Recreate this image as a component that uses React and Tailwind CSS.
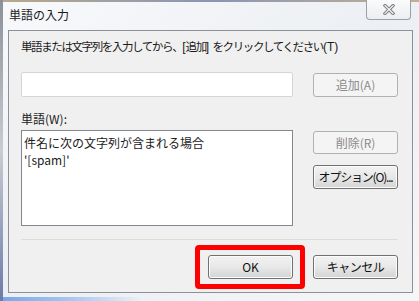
import React from 'react';

const font = { fontFamily: '"Noto Sans CJK JP", "Noto Sans", sans-serif' };
const latin = { fontFamily: '"Liberation Sans", "Noto Sans", sans-serif' };

const WinButton = ({ children, disabled, className = '' }) => (
    <button
        type="button"
        disabled={disabled}
        className={`relative w-[85px] rounded-[3px] border text-[12px] leading-none flex items-center justify-center whitespace-nowrap ${disabled
            ? 'border-[#adb2b5] bg-[#f4f4f4] text-[#8a8a8a]'
            : 'border-[#707070] bg-gradient-to-b from-[#f2f2f2] via-[#e8e8e8] to-[#d4d4d4] text-[#111] shadow-[inset_0_0_0_1px_#fcfcfc]'} ${className}`}
    >
        {children}
    </button>
);

const CloseGlyph = () => (
    <svg width="12" height="11" viewBox="0 0 12 11">
        <path d="M2 1.5 L10 9.5 M10 1.5 L2 9.5" stroke="#7d8085" strokeWidth="3.2" strokeLinecap="square" />
        <path d="M2 1.5 L10 9.5 M10 1.5 L2 9.5" stroke="#f6f6f6" strokeWidth="1.2" strokeLinecap="square" />
    </svg>
);

const App = () => {
    return (
        <div className="w-[419px] h-[301px] overflow-hidden flex bg-[#eef1f4]" style={font}>
            {/* desktop edge behind the window */}
            <div className="w-[3px] h-full bg-gradient-to-b from-[#8c9099] via-[#c9ccd1] to-[#6b7ca8]" />

            <div className="flex-1 flex flex-col bg-gradient-to-br from-[#f8f9fb] via-[#eceff3] to-[#f5f6f8]">
                {/* noise strip along the top */}
                <div className="h-[2px] bg-gradient-to-r from-[#b9a98a] via-[#8a94b4] to-[#c2b08e]" />

                {/* title bar */}
                <div className="h-[28px] flex items-start justify-between">
                    <div className="pl-[6px] pt-[5px] text-[12px] leading-[16px] text-[#1a1a1a]">単語の入力</div>
                    <div className="mr-[8px] -mt-[2px] w-[45px] h-[20px] rounded-b-[4px] border border-t-0 border-[#9aa0a8] bg-gradient-to-b from-[#fbfbfc] to-[#eceef1] flex items-center justify-center">
                        <CloseGlyph />
                    </div>
                </div>

                {/* client area */}
                <div className="ml-[5px] w-[405px] h-[263px] border border-[#8d9096] bg-[#f0f0f0] pl-[12px] pr-[14px] text-[#1a1a1a]">
                    <div className="pt-[7px] text-[11.5px] leading-[16px] tracking-[-1.4px] whitespace-nowrap">
                        単語または文字列を入力してから、
                        <span className="tracking-normal text-[12px]" style={latin}>[</span>追加<span className="tracking-normal text-[12px]" style={latin}>] </span>
                        をクリックしてください<span className="tracking-normal text-[12px]" style={latin}>(T)</span>
                    </div>

                    <div className="mt-[17px] flex gap-[20px] items-start">
                        <div className="w-[272px] h-[25px] bg-white border border-[#d3d5d8] rounded-[2px]" />
                        <WinButton disabled className="h-[24px] mt-[1px]">追加(A)</WinButton>
                    </div>

                    <div className="mt-[14px] text-[12px] leading-[16px]">単語(W):</div>

                    <div className="mt-[3px] flex gap-[20px] items-start">
                        <div className="w-[272px] h-[96px] bg-white border border-[#828790] px-[2px] pt-[3px] text-[12px] leading-[17px]">
                            <div>件名に次の文字列が含まれる場合</div>
                            <div>'[spam]'</div>
                        </div>
                        <div className="flex flex-col gap-[11px] pt-[1px]">
                            <WinButton disabled className="h-[23px]">削除(R)</WinButton>
                            <WinButton className="h-[24px] text-[11px] tracking-[-1.2px]">オプション(O)...</WinButton>
                        </div>
                    </div>

                    <div className="mt-[13px] h-px bg-[#dcdcdc]" />

                    <div className="mt-[15px] flex justify-end gap-[20px]">
                        <div className="relative">
                            <WinButton className="h-[24px]">OK</WinButton>
                            <div className="absolute -left-[13px] -right-[12px] -top-[10px] -bottom-[10px] border-[5px] border-[#ff0000] rounded-[4px]" />
                        </div>
                        <WinButton className="h-[24px] tracking-[-0.5px]">キャンセル</WinButton>
                    </div>
                </div>

                {/* bottom frame with taskbar glow */}
                <div className="flex-1 flex flex-col justify-end">
                    <div className="h-[4px] w-[140px] bg-gradient-to-r from-[#7aa7e8] via-[#a9c8f2] to-transparent" />
                </div>
            </div>
        </div>
    );
};

export default App;
